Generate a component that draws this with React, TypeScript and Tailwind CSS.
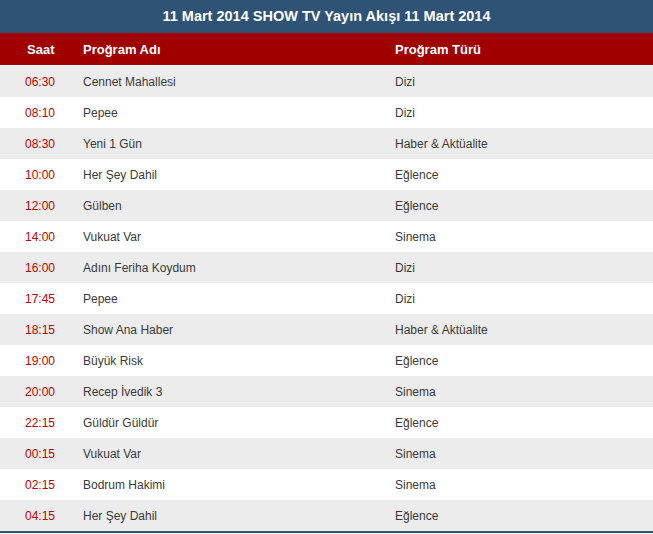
const rows: [string, string, string][] = [
  ["06:30", "Cennet Mahallesi", "Dizi"],
  ["08:10", "Pepee", "Dizi"],
  ["08:30", "Yeni 1 Gün", "Haber & Aktüalite"],
  ["10:00", "Her Şey Dahil", "Eğlence"],
  ["12:00", "Gülben", "Eğlence"],
  ["14:00", "Vukuat Var", "Sinema"],
  ["16:00", "Adını Feriha Koydum", "Dizi"],
  ["17:45", "Pepee", "Dizi"],
  ["18:15", "Show Ana Haber", "Haber & Aktüalite"],
  ["19:00", "Büyük Risk", "Eğlence"],
  ["20:00", "Recep İvedik 3", "Sinema"],
  ["22:15", "Güldür Güldür", "Eğlence"],
  ["00:15", "Vukuat Var", "Sinema"],
  ["02:15", "Bodrum Hakimi", "Sinema"],
  ["04:15", "Her Şey Dahil", "Eğlence"],
];

export default function App() {
  return (
    <div className="w-[653px] h-[534px] bg-white font-['Liberation_Sans',Arial,sans-serif] overflow-hidden">
      <div className="h-[33px] bg-[#2f5277] text-white text-[14.5px] font-bold flex items-center justify-center">
        11 Mart 2014 SHOW TV Yayın Akışı 11 Mart 2014
      </div>
      <div className="h-[33px] bg-[#a10000] text-white text-[13px] font-bold flex items-center border-b border-white pt-[1px]">
        <div className="w-[83px] pl-[27px]">Saat</div>
        <div className="w-[312px]">Proğram Adı</div>
        <div>Proğram Türü</div>
      </div>
      {rows.map(([time, name, type], i) => (
        <div
          key={i}
          className={`h-[31px] flex items-center text-[12px] text-[#3a3a3a] ${i % 2 === 0 ? "bg-[#ececec]" : "bg-white"}`}
        >
          <div className="w-[83px] pl-[25px] text-[#c00000]">{time}</div>
          <div className="w-[312px]">{name}</div>
          <div>{type}</div>
        </div>
      ))}
      <div className="h-[2px] bg-[#2f5277]" />
    </div>
  );
}
